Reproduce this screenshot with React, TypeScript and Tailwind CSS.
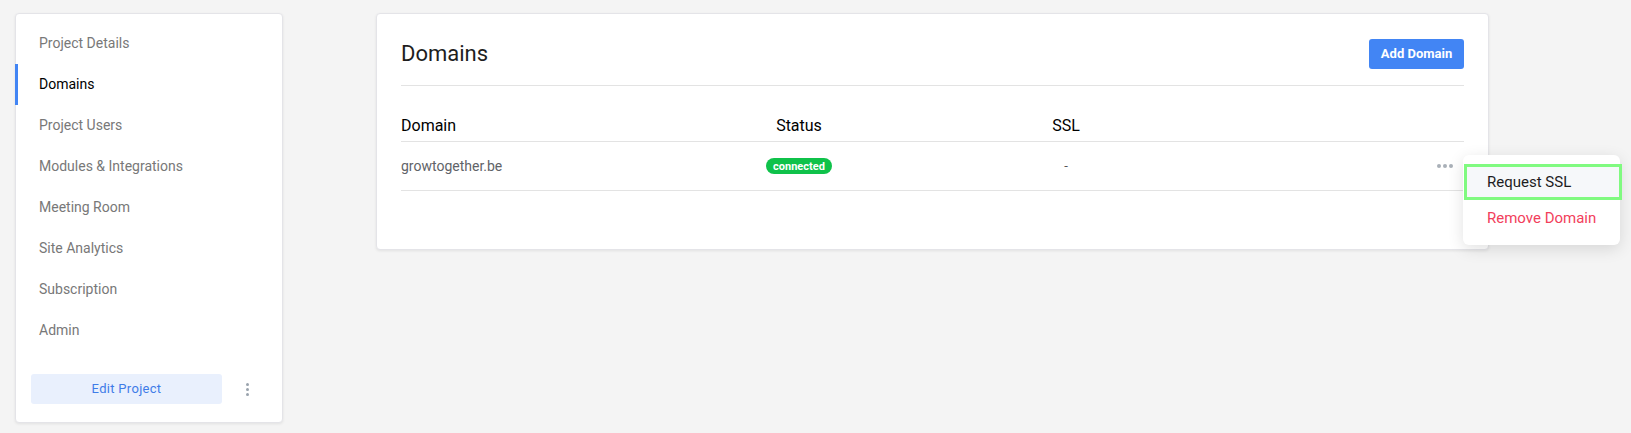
import React from "react";

const navItems = [
  "Project Details",
  "Domains",
  "Project Users",
  "Modules & Integrations",
  "Meeting Room",
  "Site Analytics",
  "Subscription",
  "Admin",
];

export default function App() {
  return (
    <div
      className="min-h-screen w-full bg-[#f4f4f4] pl-[15px] pt-[13px]"
      style={{ fontFamily: "Roboto, 'Liberation Sans', sans-serif" }}
    >
      <div className="flex items-start gap-[93px]">
        {/* Sidebar */}
        <aside className="flex h-[410px] w-[268px] flex-col rounded-[4px] border border-[#e4e4e8] bg-white pt-[9px] shadow-[0_1px_3px_rgba(0,0,0,0.08)]">
          <nav className="flex flex-col">
            {navItems.map((item) =>
              item === "Domains" ? (
                <div
                  key={item}
                  className="-ml-px flex h-[41px] items-center border-l-[3px] border-[#4285f4] pl-[21px] text-[14px] text-black"
                >
                  {item}
                </div>
              ) : (
                <div
                  key={item}
                  className="flex h-[41px] items-center pl-[23px] text-[14px] text-[#787878]"
                >
                  {item}
                </div>
              )
            )}
          </nav>
          <div className="mt-auto flex items-center pb-[18px] pl-[15px]">
            <button className="flex h-[30px] w-[191px] items-center justify-center rounded-[3px] bg-[#e9f0fd] text-[13px] font-normal tracking-[0.3px] text-[#3f7ce8]">
              Edit Project
            </button>
            <div className="ml-[24px] flex flex-col items-center gap-[2px]">
              <span className="h-[3px] w-[3px] rounded-full bg-[#9aa3ad]" />
              <span className="h-[3px] w-[3px] rounded-full bg-[#9aa3ad]" />
              <span className="h-[3px] w-[3px] rounded-full bg-[#9aa3ad]" />
            </div>
          </div>
        </aside>

        {/* Main card */}
        <main className="relative w-[1113px] rounded-[4px] border border-[#e4e4e8] bg-white px-[24px] pb-[58px] pt-[25px] shadow-[0_1px_3px_rgba(0,0,0,0.08)]">
          <div className="flex items-center justify-between border-b border-[#e3e3e3] pb-[16px]">
            <h1 className="text-[22px] font-normal leading-none text-[#1e1e1e]">Domains</h1>
            <button className="flex h-[30px] w-[95px] items-center justify-center rounded-[3px] bg-[#4285f4] text-[13px] font-bold text-white">
              Add Domain
            </button>
          </div>

          <div className="mt-[24px]">
            <div className="grid h-[32px] grid-cols-[300px_196px_338px_1fr] items-center border-b border-[#e3e3e3] text-[16px] text-black">
              <div>Domain</div>
              <div className="text-center">Status</div>
              <div className="text-center">SSL</div>
              <div />
            </div>
            <div className="grid h-[49px] grid-cols-[300px_196px_338px_1fr] items-center border-b border-[#e3e3e3]">
              <div className="text-[14px] text-[#5f6368]">growtogether.be</div>
              <div className="flex justify-center">
                <span className="flex h-[16px] w-[66px] items-center justify-center rounded-full bg-[#0fc24a] text-[11px] font-bold leading-none text-white">
                  connected
                </span>
              </div>
              <div className="text-center text-[13px] text-[#555]">-</div>
              <div className="flex justify-end pr-[11px]">
                <div className="flex items-center gap-[2px]">
                  <span className="h-[4px] w-[4px] rounded-full bg-[#a9b0b8]" />
                  <span className="h-[4px] w-[4px] rounded-full bg-[#a9b0b8]" />
                  <span className="h-[4px] w-[4px] rounded-full bg-[#a9b0b8]" />
                </div>
              </div>
            </div>
          </div>

          {/* Dropdown menu */}
          <div className="absolute left-[1086px] top-[141px] z-10 w-[157px] rounded-[6px] bg-white pb-[9px] pt-[9px] shadow-[0_4px_16px_rgba(0,0,0,0.12)]">
            <div className="-mr-[2px] ml-px flex h-[36px] items-center border-[3px] border-[#80fa80] bg-[#f6f8fa] pl-[20px] text-[15px] text-[#1d1d1f]">
              Request SSL
            </div>
            <div className="flex h-[36px] items-center pl-[24px] text-[15px] text-[#f2405b]">
              Remove Domain
            </div>
          </div>
        </main>
      </div>
    </div>
  );
}
